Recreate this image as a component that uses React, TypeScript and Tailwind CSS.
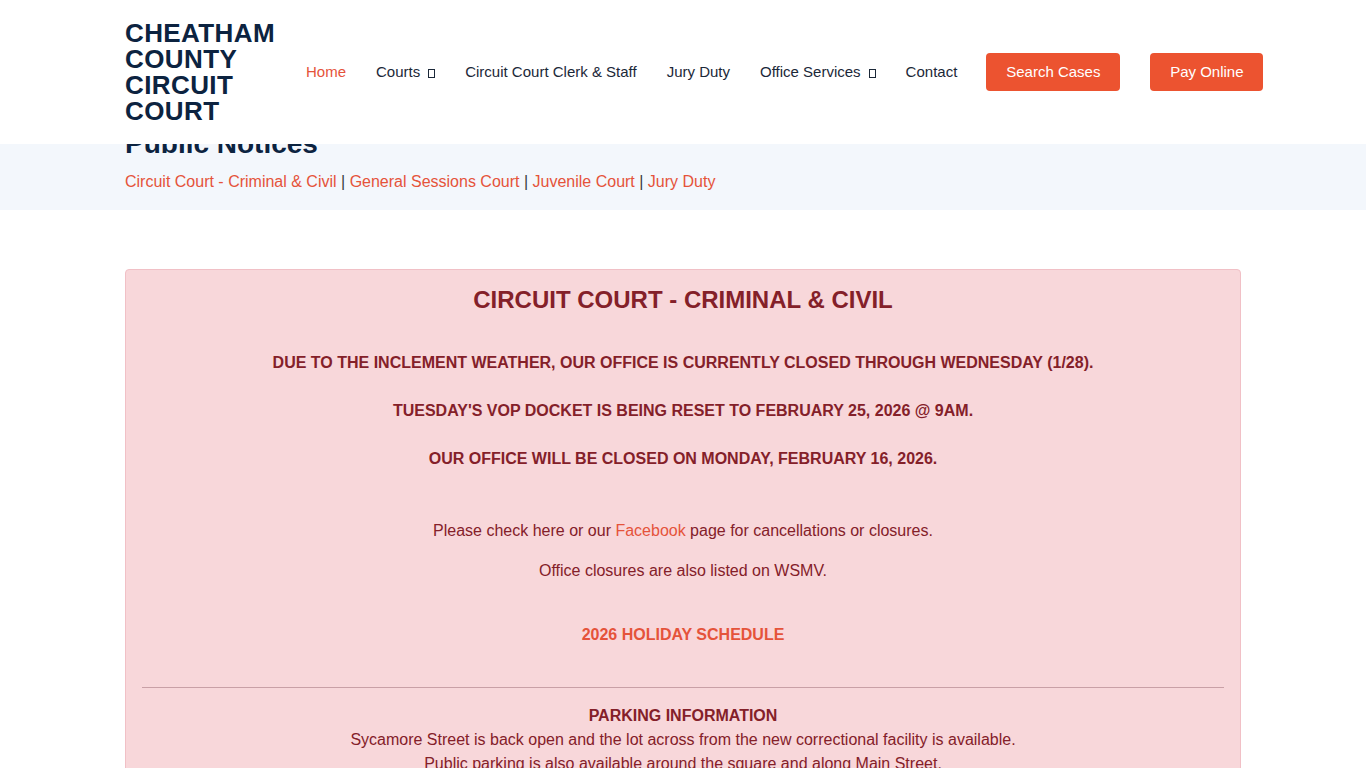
import React from 'react'

const font = { fontFamily: '"Liberation Sans", Arial, sans-serif' }

function Caret() {
  return <span className="ml-[8px] inline-block h-[9px] w-[7px] border border-current align-[-1px]" />
}

const navItems: { label: string; active?: boolean; caret?: boolean }[] = [
  { label: 'Home', active: true },
  { label: 'Courts', caret: true },
  { label: 'Circuit Court Clerk & Staff' },
  { label: 'Jury Duty' },
  { label: 'Office Services', caret: true },
  { label: 'Contact' },
]

function Header() {
  return (
    <header className="fixed inset-x-0 top-0 z-10 h-[144px] bg-white">
      <div className="mx-auto flex h-full w-[1116px] items-center">
        <div className="mt-[-1px] w-[181px] shrink-0 text-[26px] font-bold uppercase leading-[26px] tracking-[0.4px] text-[#0c2340]">
          Cheatham
          <br />
          County
          <br />
          Circuit
          <br />
          Court
        </div>
        <nav className="flex shrink-0 items-center gap-[30px] text-[15px] text-[#1b2838]">
          {navItems.map((item) => (
            <a key={item.label} className={item.active ? 'text-[#e5533a]' : ''}>
              {item.label}
              {item.caret && <Caret />}
            </a>
          ))}
        </nav>
        <div className="ml-[29px] flex shrink-0 gap-[30px]">
          <a className="flex h-[38px] w-[134px] items-center justify-center rounded-[4px] bg-[#ec5330] text-[15px] text-white">
            Search Cases
          </a>
          <a className="flex h-[38px] w-[113px] items-center justify-center rounded-[4px] bg-[#ec5330] text-[15px] text-white">
            Pay Online
          </a>
        </div>
      </div>
    </header>
  )
}

function Breadcrumbs() {
  const links = ['Circuit Court - Criminal & Civil', 'General Sessions Court', 'Juvenile Court', 'Jury Duty']
  return (
    <p className="mt-[8px] text-[16px] text-[#3a3a3a]">
      {links.map((l, i) => (
        <span key={l}>
          {i > 0 && ' | '}
          <a className="text-[#e5533a]">{l}</a>
        </span>
      ))}
    </p>
  )
}

export default function App() {
  return (
    <div style={font} className="min-h-screen bg-white">
      <Header />
      <section className="bg-[#f3f7fc] pb-[16px] pt-[126px]">
        <div className="mx-auto w-[1116px]">
          <h1 className="text-[28px] font-bold leading-[36px] text-[#0c2340]">Public Notices</h1>
          <Breadcrumbs />
        </div>
      </section>
      <main className="mx-auto mt-[59px] w-[1116px]">
        <div className="rounded-[4px] border border-[#f1c0c6] bg-[#f8d7da] px-[16px] pb-[40px] pt-[16px] text-center text-[16px] text-[#842029]">
          <h2 className="text-[24px] font-bold leading-[28px]">CIRCUIT COURT - CRIMINAL &amp; CIVIL</h2>
          <div className="mt-[40px] flex flex-col gap-[30px] font-bold leading-[18px]">
            <p>DUE TO THE INCLEMENT WEATHER, OUR OFFICE IS CURRENTLY CLOSED THROUGH WEDNESDAY (1/28).</p>
            <p>TUESDAY&apos;S VOP DOCKET IS BEING RESET TO FEBRUARY 25, 2026 @ 9AM.</p>
            <p>OUR OFFICE WILL BE CLOSED ON MONDAY, FEBRUARY 16, 2026.</p>
          </div>
          <p className="mt-[54px] leading-[18px]">
            Please check here or our <a className="text-[#e5533a]">Facebook</a> page for cancellations or closures.
          </p>
          <p className="mt-[22px] leading-[18px]">Office closures are also listed on WSMV.</p>
          <p className="mt-[46px] font-bold leading-[18px] text-[#e5533a]">2026 HOLIDAY SCHEDULE</p>
          <hr className="mt-[43px] border-t border-[#c9a0a6]" />
          <p className="mt-[16px] font-bold leading-[24px]">PARKING INFORMATION</p>
          <p className="leading-[24px]">
            Sycamore Street is back open and the lot across from the new correctional facility is available.
          </p>
          <p className="leading-[24px]">Public parking is also available around the square and along Main Street.</p>
        </div>
      </main>
    </div>
  )
}
